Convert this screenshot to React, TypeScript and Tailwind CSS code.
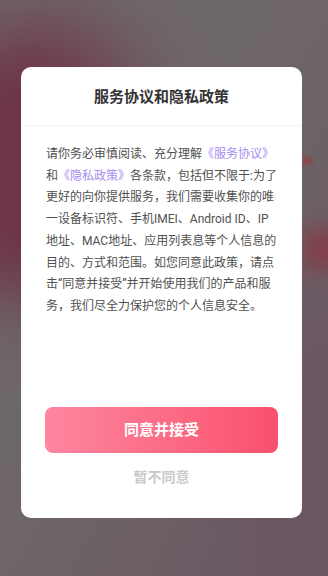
import React from "react";

export default function App() {
  const link = "text-[#a68cf3]";
  return (
    <div className="relative w-full h-[576px] overflow-hidden bg-gradient-to-br from-[#6f6b6b] via-[#6d6566] to-[#6a5663]">
      {/* blurred backdrop blobs */}
      <div className="absolute -left-[70px] top-[10px] w-[220px] h-[300px] rounded-[50%] bg-[#703a4a] blur-2xl opacity-90" />
      <div className="absolute -left-[40px] top-[60px] w-[120px] h-[220px] rounded-[50%] bg-[#6c3145] blur-xl opacity-70" />
      <div className="absolute left-[302px] top-[228px] w-[40px] h-[44px] rounded-full bg-[#8a3540] blur-md opacity-90" />
      <div className="absolute left-[302px] top-[158px] w-[10px] h-[6px] rounded-full bg-[#9a3a44] blur-[2px]" />
      <div className="absolute left-[250px] top-[300px] w-[140px] h-[300px] rounded-[50%] bg-[#6b5562] blur-2xl opacity-80" />

      <div className="relative flex pl-[21px] pt-[67px]">
        <div
          className="w-[281px] h-[451px] bg-white rounded-[10px] flex flex-col"
          style={{ fontFamily: '"Roboto", "Noto Sans CJK SC", sans-serif' }}
        >
          <div className="h-[58px] flex items-center justify-center text-[15px] font-bold text-[#333333] pt-[2px]">
            服务协议和隐私政策
          </div>
          <div className="h-px bg-[#f3f3f3]" />
          <div className="pl-[25px] pt-[18px] text-[12px] leading-[21.7px] text-[#505050] whitespace-nowrap">
            <div>
              请你务必审慎阅读、充分理解<span className={link}>《服务协议》</span>
            </div>
            <div>
              和<span className={link}>《隐私政策》</span>各条款，包括但不限于:为了
            </div>
            <div>更好的向你提供服务，我们需要收集你的唯</div>
            <div>一设备标识符、手机IMEI、Android ID、IP</div>
            <div>地址、MAC地址、应用列表息等个人信息的</div>
            <div>目的、方式和范围。如您同意此政策，请点</div>
            <div>击“同意并接受”并开始使用我们的产品和服</div>
            <div>务，我们尽全力保护您的个人信息安全。</div>
          </div>
          <div className="mt-auto px-[24px] pb-[31px] flex flex-col items-center">
            <button className="w-full h-[46px] rounded-[8px] bg-gradient-to-r from-[#fd86a0] to-[#f94f6d] text-white text-[15px] font-semibold">
              同意并接受
            </button>
            <div className="mt-[14px] h-[20px] flex items-center text-[14px] font-semibold text-[#cacaca]">
              暂不同意
            </div>
          </div>
        </div>
      </div>
    </div>
  );
}
